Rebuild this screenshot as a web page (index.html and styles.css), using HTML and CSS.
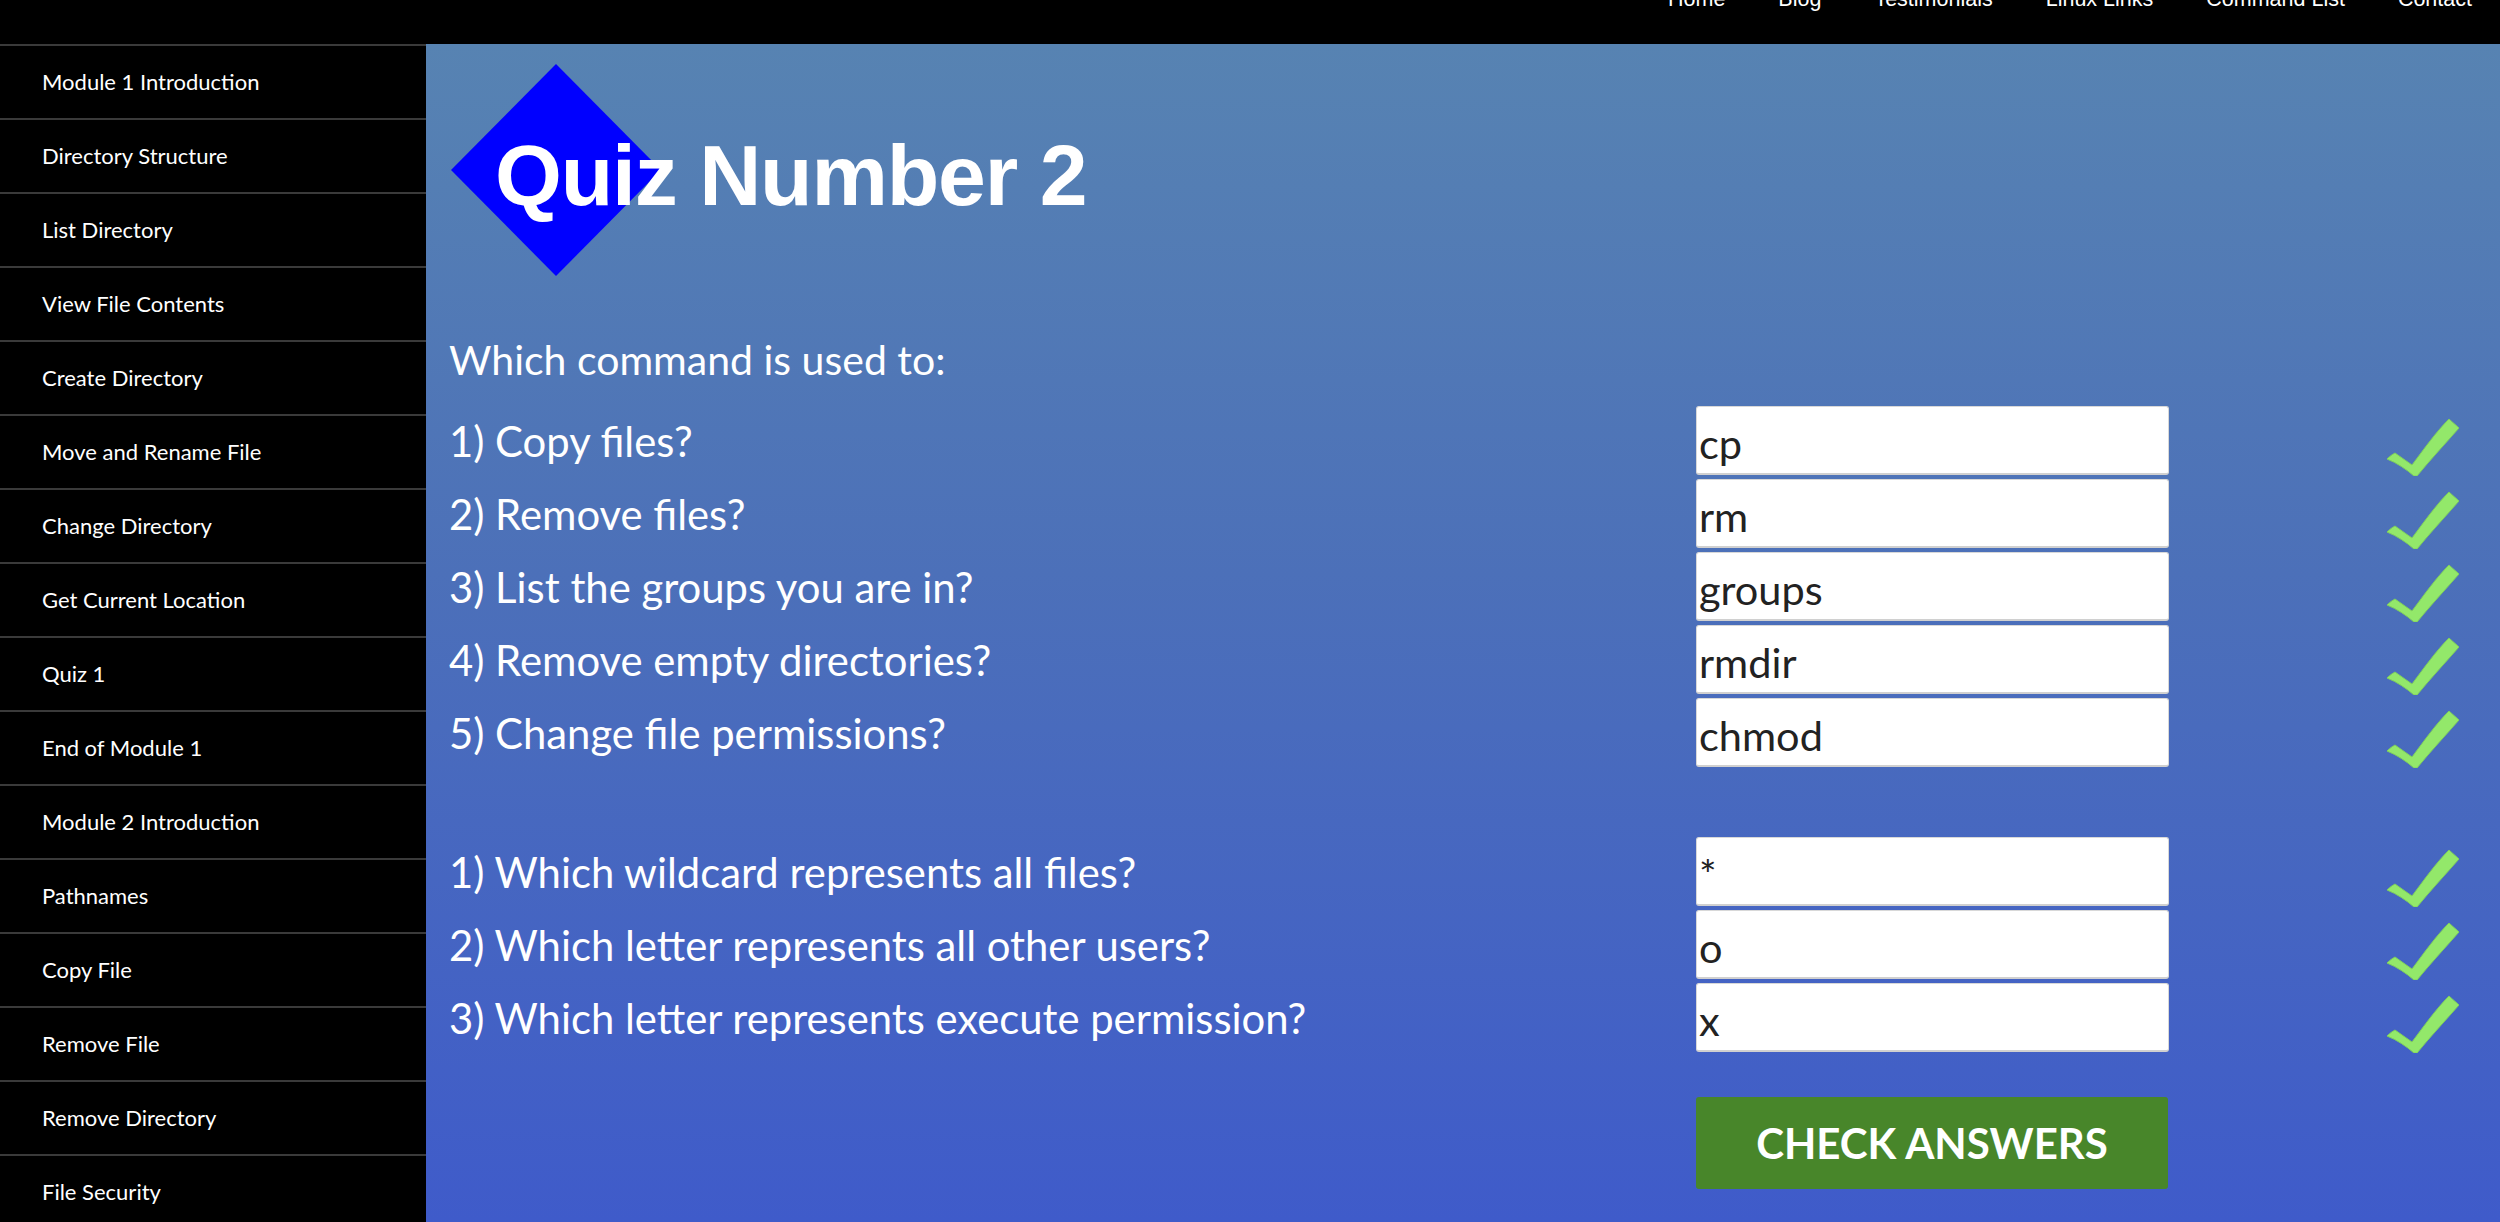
FILE: index.html
```html
<!DOCTYPE html>
<html lang="en">
<head>
<meta charset="utf-8">
<title>Quiz Number 2</title>
<link rel="stylesheet" href="styles.css">
</head>
<body>
<header class="topbar">
  <nav class="topnav">
    <a href="#">Home</a>
    <a href="#">Blog</a>
    <a href="#">Testimonials</a>
    <a href="#">Linux Links</a>
    <a href="#">Command List</a>
    <a href="#">Contact</a>
  </nav>
</header>
<div class="layout">
  <aside class="sidebar">
    <a class="side-item" href="#">Module 1 Introduction</a>
    <a class="side-item" href="#">Directory Structure</a>
    <a class="side-item" href="#">List Directory</a>
    <a class="side-item" href="#">View File Contents</a>
    <a class="side-item" href="#">Create Directory</a>
    <a class="side-item" href="#">Move and Rename File</a>
    <a class="side-item" href="#">Change Directory</a>
    <a class="side-item" href="#">Get Current Location</a>
    <a class="side-item" href="#">Quiz 1</a>
    <a class="side-item" href="#">End of Module 1</a>
    <a class="side-item" href="#">Module 2 Introduction</a>
    <a class="side-item" href="#">Pathnames</a>
    <a class="side-item" href="#">Copy File</a>
    <a class="side-item" href="#">Remove File</a>
    <a class="side-item" href="#">Remove Directory</a>
    <a class="side-item" href="#">File Security</a>
  </aside>
  <main class="main">
    <div class="logo">
      <div class="diamond"></div>
      <div class="logo-title">Quiz Number 2</div>
    </div>
    <h2 class="intro">Which command is used to:</h2>
    <div class="quiz">
      <label class="q">1) Copy files?</label>
      <input class="ans" type="text" value="cp">
      <span class="ok"><svg viewBox="0 0 72 58" width="72" height="58"><path d="M0,41 C3,38 6,36 8,35 L25,47 C37,31 49,14 62,1 C65,4 69,7 72,10 C58,26 43,42 30,58 L27,58 C19,51 10,45 0,41 Z"/></svg></span>
      <label class="q">2) Remove files?</label>
      <input class="ans" type="text" value="rm">
      <span class="ok"><svg viewBox="0 0 72 58" width="72" height="58"><path d="M0,41 C3,38 6,36 8,35 L25,47 C37,31 49,14 62,1 C65,4 69,7 72,10 C58,26 43,42 30,58 L27,58 C19,51 10,45 0,41 Z"/></svg></span>
      <label class="q">3) List the groups you are in?</label>
      <input class="ans" type="text" value="groups">
      <span class="ok"><svg viewBox="0 0 72 58" width="72" height="58"><path d="M0,41 C3,38 6,36 8,35 L25,47 C37,31 49,14 62,1 C65,4 69,7 72,10 C58,26 43,42 30,58 L27,58 C19,51 10,45 0,41 Z"/></svg></span>
      <label class="q">4) Remove empty directories?</label>
      <input class="ans" type="text" value="rmdir">
      <span class="ok"><svg viewBox="0 0 72 58" width="72" height="58"><path d="M0,41 C3,38 6,36 8,35 L25,47 C37,31 49,14 62,1 C65,4 69,7 72,10 C58,26 43,42 30,58 L27,58 C19,51 10,45 0,41 Z"/></svg></span>
      <label class="q">5) Change file permissions?</label>
      <input class="ans" type="text" value="chmod">
      <span class="ok"><svg viewBox="0 0 72 58" width="72" height="58"><path d="M0,41 C3,38 6,36 8,35 L25,47 C37,31 49,14 62,1 C65,4 69,7 72,10 C58,26 43,42 30,58 L27,58 C19,51 10,45 0,41 Z"/></svg></span>
    </div>
    <div class="quiz quiz-second">
      <label class="q">1) Which wildcard represents all files?</label>
      <input class="ans" type="text" value="*">
      <span class="ok"><svg viewBox="0 0 72 58" width="72" height="58"><path d="M0,41 C3,38 6,36 8,35 L25,47 C37,31 49,14 62,1 C65,4 69,7 72,10 C58,26 43,42 30,58 L27,58 C19,51 10,45 0,41 Z"/></svg></span>
      <label class="q">2) Which letter represents all other users?</label>
      <input class="ans" type="text" value="o">
      <span class="ok"><svg viewBox="0 0 72 58" width="72" height="58"><path d="M0,41 C3,38 6,36 8,35 L25,47 C37,31 49,14 62,1 C65,4 69,7 72,10 C58,26 43,42 30,58 L27,58 C19,51 10,45 0,41 Z"/></svg></span>
      <label class="q">3) Which letter represents execute permission?</label>
      <input class="ans" type="text" value="x">
      <span class="ok"><svg viewBox="0 0 72 58" width="72" height="58"><path d="M0,41 C3,38 6,36 8,35 L25,47 C37,31 49,14 62,1 C65,4 69,7 72,10 C58,26 43,42 30,58 L27,58 C19,51 10,45 0,41 Z"/></svg></span>
      <span class="spacer"></span>
      <button class="check-btn" type="button">CHECK ANSWERS</button>
    </div>
  </main>
</div>
</body>
</html>
```

FILE: styles.css
```css
* { box-sizing: border-box; }

html, body {
  margin: 0;
  padding: 0;
  height: 100%;
  overflow: hidden;
  background: #000;
  font-family: Lato, "Open Sans", sans-serif;
}

.topbar {
  height: 44px;
  background: #000;
  overflow: hidden;
}

.topnav {
  display: flex;
  justify-content: flex-end;
  gap: 53px;
  padding-right: 28px;
  margin-top: -13px;
}

.topnav a {
  font-family: "Liberation Sans", Arial, sans-serif;
  font-size: 21.5px;
  line-height: 24px;
  color: #fff;
  text-decoration: none;
}

.layout {
  display: flex;
  height: calc(100vh - 44px);
}

.sidebar {
  width: 426px;
  flex: 0 0 426px;
  background: #000;
  display: flex;
  flex-direction: column;
  overflow: hidden;
}

.side-item {
  flex: 0 0 74px;
  display: flex;
  align-items: center;
  padding-left: 42px;
  padding-bottom: 2px;
  border-top: 2px solid #3a3a3a;
  color: #fff;
  font-size: 22px;
  text-decoration: none;
}

.main {
  flex: 1;
  background: linear-gradient(180deg, #5783b2 0%, #4c70b9 45%, #3f5bca 100%);
  padding: 20px 41px 0 23px;
  overflow: hidden;
}

.logo {
  position: relative;
  height: 212px;
}

.diamond {
  position: absolute;
  left: 2px;
  top: 0;
  width: 210px;
  height: 212px;
  background: #0000ff;
  clip-path: polygon(50% 0, 100% 50%, 50% 100%, 0 50%);
}

.logo-title {
  position: relative;
  padding-top: 68px;
  padding-left: 46px;
  font-family: "Liberation Sans", Arial, sans-serif;
  font-weight: bold;
  font-size: 86px;
  line-height: 86px;
  letter-spacing: -1.2px;
  color: #fff;
}

.intro {
  margin: 60px 0 22px;
  font-weight: normal;
  font-size: 41px;
  line-height: 48px;
  color: #fff;
}

.quiz {
  display: grid;
  grid-template-columns: 1fr 473px 290px;
  grid-auto-rows: 69px;
  row-gap: 4px;
  align-items: center;
}

.quiz-second {
  margin-top: 70px;
  grid-template-rows: 69px 69px 69px auto;
}

.q {
  font-size: 41.8px;
  line-height: 50px;
  color: #fff;
}

.ans {
  height: 69px;
  width: 473px;
  margin: 0;
  padding: 5px 2px 0;
  border: 1px solid #d8d8d8;
  border-bottom: 2px solid #d0d0d0;
  border-radius: 3px;
  background: #fff;
  font-family: Lato, "Open Sans", sans-serif;
  font-size: 41.5px;
  color: #222;
}

.ok {
  justify-self: end;
  display: flex;
  transform: translateY(6px);
}

.ok svg path {
  fill: #93e86a;
  stroke: #7fcf5c;
  stroke-width: 1;
}

.spacer {
  grid-column: 1;
}

.check-btn {
  grid-column: 2;
  align-self: end;
  margin-top: 41px;
  width: 472px;
  height: 92px;
  border: none;
  border-radius: 3px;
  background: #48862a;
  color: #fff;
  font-family: Lato, "Open Sans", sans-serif;
  font-weight: bold;
  font-size: 42px;
  cursor: pointer;
}
```
